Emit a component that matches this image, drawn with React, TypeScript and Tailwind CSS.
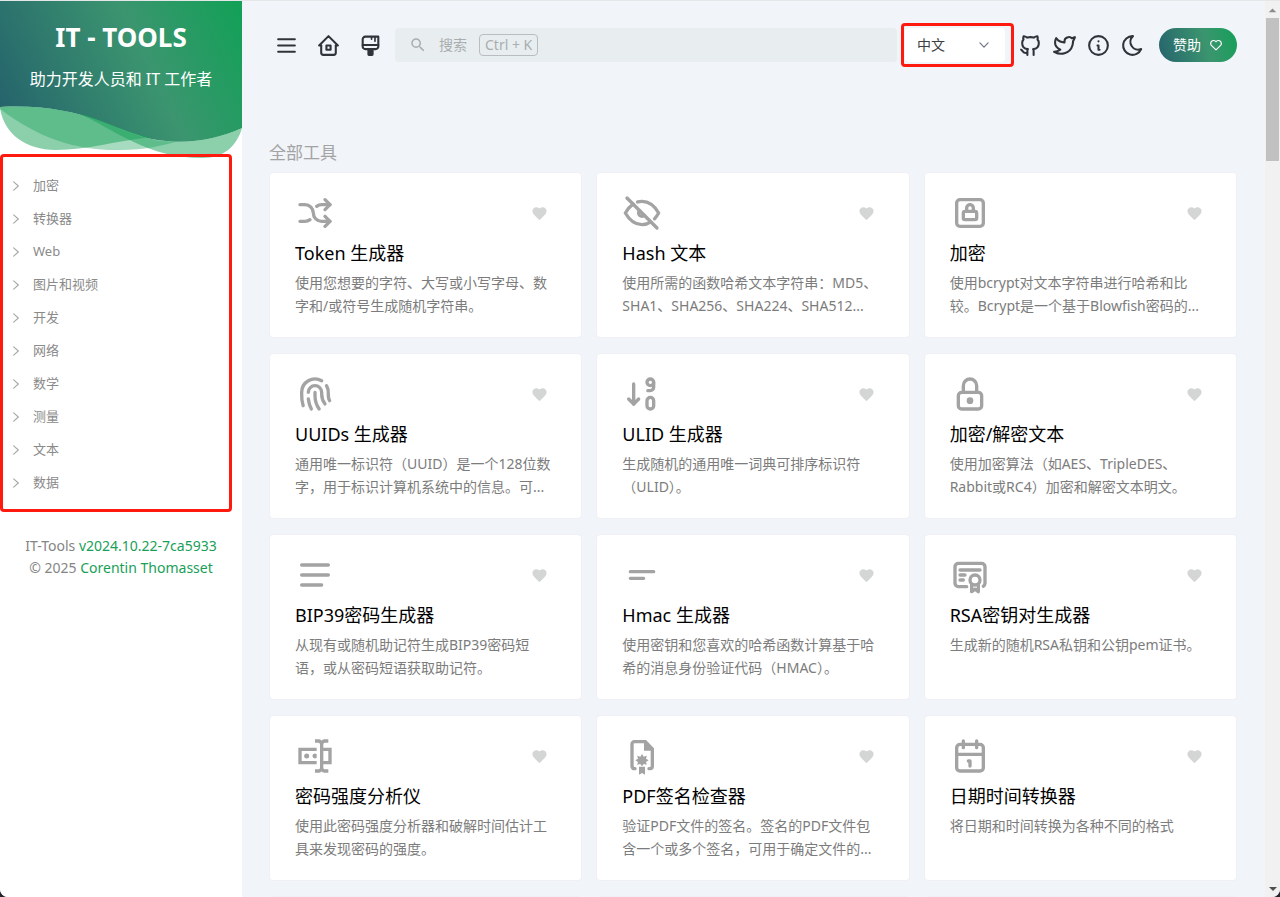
import React from 'react';

interface IconProps {
  className?: string;
  children: React.ReactNode;
}

const StrokeIcon: React.FC<IconProps> = ({ className, children }) => (
  <svg
    viewBox="0 0 24 24"
    fill="none"
    stroke="currentColor"
    strokeWidth="2"
    strokeLinecap="round"
    strokeLinejoin="round"
    className={className}
    aria-hidden="true"
  >
    {children}
  </svg>
);

const FillIcon: React.FC<IconProps> = ({ className, children }) => (
  <svg viewBox="0 0 24 24" fill="currentColor" className={className} aria-hidden="true">
    {children}
  </svg>
);

const toolIcon = 'size-10';

const ShuffleIcon = () => (
  <StrokeIcon className={toolIcon}>
    <path d="M18 4l3 3l-3 3" />
    <path d="M18 20l3 -3l-3 -3" />
    <path d="M3 7h3a5 5 0 0 1 5 5a5 5 0 0 0 5 5h5" />
    <path d="M21 7h-5a4.978 4.978 0 0 0 -3 1m-4 8a4.984 4.984 0 0 1 -3 1h-3" />
  </StrokeIcon>
);

const EyeOffIcon = () => (
  <StrokeIcon className={toolIcon}>
    <path d="M3 3l18 18" />
    <path d="M10.584 10.587a2 2 0 0 0 2.828 2.83" />
    <path d="M9.363 5.365a9.466 9.466 0 0 1 2.637 -.365c4 0 7.333 2.333 10 7c-.778 1.361 -1.612 2.524 -2.503 3.488m-2.14 1.861c-1.631 1.1 -3.415 1.651 -5.357 1.651c-4 0 -7.333 -2.333 -10 -7c1.369 -2.395 2.913 -4.175 4.632 -5.341" />
  </StrokeIcon>
);

const LockSquareIcon = () => (
  <StrokeIcon className={toolIcon}>
    <rect x="8" y="11" width="8" height="5" rx="1" />
    <path d="M10 11v-2a2 2 0 1 1 4 0v2" />
    <rect x="4" y="4" width="16" height="16" rx="2" />
  </StrokeIcon>
);

const FingerprintIcon = () => (
  <StrokeIcon className={toolIcon}>
    <path d="M18.9 7a8 8 0 0 1 1.1 5v1a6 6 0 0 0 .8 3" />
    <path d="M8 11a4 4 0 0 1 8 0v1a10 10 0 0 0 2 6" />
    <path d="M12 11v2a14 14 0 0 0 2.5 8" />
    <path d="M8 15a18 18 0 0 0 1.8 6" />
    <path d="M4.9 19a22 22 0 0 1 -.9 -7v-1a8 8 0 0 1 12 -6.95" />
  </StrokeIcon>
);

const SortNumbersIcon = () => (
  <StrokeIcon className={toolIcon}>
    <path d="M4 15l3 3l3 -3" />
    <path d="M7 6v12" />
    <path d="M17 14a2 2 0 0 1 2 2v3a2 2 0 1 1 -4 0v-3a2 2 0 0 1 2 -2z" />
    <circle cx="17" cy="5" r="2" />
    <path d="M19 5v3a2 2 0 0 1 -2 2h-1.5" />
  </StrokeIcon>
);

const LockIcon = () => (
  <StrokeIcon className={toolIcon}>
    <rect x="5" y="11" width="14" height="10" rx="2" />
    <circle cx="12" cy="16" r="1" />
    <path d="M8 11v-4a4 4 0 0 1 8 0v4" />
  </StrokeIcon>
);

const AlignLeftIcon = () => (
  <StrokeIcon className={toolIcon}>
    <path d="M4 6h16M4 12h16M4 18h12" />
  </StrokeIcon>
);

const ShortTextIcon = () => (
  <StrokeIcon className={toolIcon}>
    <path d="M5 10h14M5 14h8" />
  </StrokeIcon>
);

const CertificateIcon = () => (
  <StrokeIcon className={toolIcon}>
    <circle cx="15" cy="15" r="3" />
    <path d="M13 17.5v4.5l2 -1.5l2 1.5v-4.5" />
    <path d="M10 19h-5a2 2 0 0 1 -2 -2v-10c0 -1.1 .9 -2 2 -2h14a2 2 0 0 1 2 2v10a2 2 0 0 1 -1 1.73" />
    <path d="M6 9h12M6 12h3M6 15h2" />
  </StrokeIcon>
);

const PasswordIcon = () => (
  <FillIcon className={toolIcon}>
    <path d="M17,7H22V17H17V19A1,1 0 0,0 18,20H20V22H17.5C16.95,22 16,21.55 16,21C16,21.55 15.05,22 14.5,22H12V20H14A1,1 0 0,0 15,19V5A1,1 0 0,0 14,4H12V2H14.5C15.05,2 16,2.45 16,3C16,2.45 16.95,2 17.5,2H20V4H18A1,1 0 0,0 17,5V7M2,7H13V9H4V15H13V17H2V7M20,15V9H17V15H20M8.5,12A1.5,1.5 0 0,0 7,10.5A1.5,1.5 0 0,0 5.5,12A1.5,1.5 0 0,0 7,13.5A1.5,1.5 0 0,0 8.5,12M13,10.89C12.39,10.33 11.44,10.38 10.88,11C10.32,11.6 10.37,12.55 11,13.11C11.55,13.63 12.43,13.63 13,13.11V10.89Z" />
  </FillIcon>
);

const PdfSignatureIcon = () => (
  <FillIcon className={toolIcon}>
    <path
      d="M7.8 19.6H7.4A1.4 1.4 0 0 1 6 18.2V4.8A1.4 1.4 0 0 1 7.4 3.4H14L18.2 7.8V18.2A1.4 1.4 0 0 1 16.8 19.6H16.2"
      fill="none"
      stroke="currentColor"
      strokeWidth="2"
      strokeLinecap="round"
    />
    <path d="M13.2 2.8V8.8H19.2Z" />
    <path d="M12 10.8L13 12.4L14.9 11.9L14.4 13.6L16 14.6L14.4 15.6L14.9 17.3L13 16.8L12 18.2L11 16.8L9.1 17.3L9.6 15.6L8 14.6L9.6 13.6L9.1 11.9L11 12.4Z" />
    <path d="M10.2 18.4H13.8V23.2L12 22.2L10.2 23.2Z" />
  </FillIcon>
);

const CalendarIcon = () => (
  <StrokeIcon className={toolIcon}>
    <rect x="4" y="5" width="16" height="16" rx="2" />
    <path d="M16 3v4M8 3v4M4 11h16" />
    <path d="M11 15h1M12 15v3" />
  </StrokeIcon>
);

const HeartIcon = () => (
  <FillIcon className="size-[17px]">
    <path d="M12 21.35l-1.45-1.32C5.4 15.36 2 12.28 2 8.5C2 5.42 4.42 3 7.5 3c1.74 0 3.41.81 4.5 2.09C13.09 3.81 14.76 3 16.5 3C19.58 3 22 5.42 22 8.5c0 3.78-3.4 6.86-8.55 11.54L12 21.35z" />
  </FillIcon>
);

interface Tool {
  name: string;
  description: string;
  icon: React.FC;
}

const tools: Tool[] = [
  { name: 'Token 生成器', description: '使用您想要的字符、大写或小写字母、数\n字和/或符号生成随机字符串。', icon: ShuffleIcon },
  { name: 'Hash 文本', description: '使用所需的函数哈希文本字符串：MD5、\nSHA1、SHA256、SHA224、SHA512...', icon: EyeOffIcon },
  { name: '加密', description: '使用bcrypt对文本字符串进行哈希和比\n较。Bcrypt是一个基于Blowfish密码的...', icon: LockSquareIcon },
  { name: 'UUIDs 生成器', description: '通用唯一标识符（UUID）是一个128位数\n字，用于标识计算机系统中的信息。可...', icon: FingerprintIcon },
  { name: 'ULID 生成器', description: '生成随机的通用唯一词典可排序标识符\n（ULID）。', icon: SortNumbersIcon },
  { name: '加密/解密文本', description: '使用加密算法（如AES、TripleDES、\nRabbit或RC4）加密和解密文本明文。', icon: LockIcon },
  { name: 'BIP39密码生成器', description: '从现有或随机助记符生成BIP39密码短\n语，或从密码短语获取助记符。', icon: AlignLeftIcon },
  { name: 'Hmac 生成器', description: '使用密钥和您喜欢的哈希函数计算基于哈\n希的消息身份验证代码（HMAC）。', icon: ShortTextIcon },
  { name: 'RSA密钥对生成器', description: '生成新的随机RSA私钥和公钥pem证书。', icon: CertificateIcon },
  { name: '密码强度分析仪', description: '使用此密码强度分析器和破解时间估计工\n具来发现密码的强度。', icon: PasswordIcon },
  { name: 'PDF签名检查器', description: '验证PDF文件的签名。签名的PDF文件包\n含一个或多个签名，可用于确定文件的...', icon: PdfSignatureIcon },
  { name: '日期时间转换器', description: '将日期和时间转换为各种不同的格式', icon: CalendarIcon },
];

const categories = ['加密', '转换器', 'Web', '图片和视频', '开发', '网络', '数学', '测量', '文本', '数据'];

const ToolCard: React.FC<{ tool: Tool }> = ({ tool }) => {
  const Icon = tool.icon;
  return (
    <article className="min-h-[166px] rounded border border-[#efeff5] bg-white px-[25px] py-5">
      <div className="flex items-center justify-between text-[#a3a3a3]">
        <Icon />
        <button
          type="button"
          aria-label="收藏"
          className="flex size-[34px] items-center justify-center text-[#d4d6d6]"
        >
          <HeartIcon />
        </button>
      </div>
      <h3 className="mt-1.5 text-lg leading-7 whitespace-nowrap text-black">{tool.name}</h3>
      <p className="mt-1 text-sm leading-[23px] whitespace-pre text-[#7c7c7c]">{tool.description}</p>
    </article>
  );
};

const SidebarHero = () => (
  <a href="#home" className="relative block h-[153px] text-center text-white">
    <svg
      viewBox="0 0 243 160"
      preserveAspectRatio="none"
      className="absolute top-0 left-0 h-40 w-full"
      aria-hidden="true"
    >
      <defs>
        <linearGradient id="hero" gradientUnits="userSpaceOnUse" x1="11" y1="135" x2="246" y2="24">
          <stop offset="0" stopColor="#25636c" />
          <stop offset="0.6" stopColor="#3b956f" />
          <stop offset="1" stopColor="#14a058" />
        </linearGradient>
      </defs>
      <path d="M0 0H243V127C214 140 184 144 152 138C112 129 82 102 0 106Z" fill="url(#hero)" />
      <path
        d="M0 107C4 133 26 149 56 149C88 149 116 140 152 136C112 129 82 102 0 106Z"
        fill="#18a058"
        fillOpacity="0.5"
      />
      <path
        d="M0 108C40 138 78 150 122 149C144 149 162 145 180 140C166 141 158 140 152 138C112 129 82 102 0 106Z"
        fill="#18a058"
        fillOpacity="0.38"
      />
      <path
        d="M78 112C118 130 148 157 203 157C226 157 238 144 243 127C214 140 184 144 152 138C124 132 104 118 78 112Z"
        fill="#18a058"
        fillOpacity="0.5"
      />
    </svg>
    <div className="relative pt-[18px]">
      <div className="text-[26px] leading-9 font-bold">IT - TOOLS</div>
      <div className="mt-3 text-base leading-6">助力开发人员和 IT 工作者</div>
    </div>
  </a>
);

const Sidebar = () => (
  <aside className="w-[242px] shrink-0 bg-white">
    <SidebarHero />
    <nav className="relative mr-2.5 rounded-sm border-3 border-[#ff1a10] pt-3 pb-2.5">
      {categories.map((name) => (
        <button
          key={name}
          type="button"
          className="flex h-[33px] w-full items-center gap-2.5 pl-1.5 text-[13px] text-[#8a8a8a]"
        >
          <StrokeIcon className="size-3.5 text-[#a8a8a8]">
            <path d="M8 5l8 7l-8 7" />
          </StrokeIcon>
          {name}
        </button>
      ))}
    </nav>
    <footer className="pt-[23px] text-center text-sm leading-[22px] text-[#858585]">
      <div>
        IT-Tools{' '}
        <a href="#version" className="text-[#18a058]">
          v2024.10.22-7ca5933
        </a>
      </div>
      <div>
        © 2025{' '}
        <a href="#author" className="text-[#18a058]">
          Corentin Thomasset
        </a>
      </div>
    </footer>
  </aside>
);

const BarButton: React.FC<{ label: string; children: React.ReactNode }> = ({ label, children }) => (
  <button type="button" aria-label={label} className="flex size-[34px] shrink-0 items-center justify-center">
    <StrokeIcon className="size-[25px]">{children}</StrokeIcon>
  </button>
);

const TopBar = () => (
  <header className="flex items-center gap-2 text-[#30343a]">
    <BarButton label="菜单">
      <path d="M4 6h16M4 12h16M4 18h16" />
    </BarButton>
    <BarButton label="首页">
      <path d="M5 12H3l9 -9l9 9h-2" />
      <path d="M5 12v7a2 2 0 0 0 2 2h10a2 2 0 0 0 2 -2v-7" />
      <rect x="10" y="12" width="4" height="4" />
    </BarButton>
    <BarButton label="主题">
      <path d="M7 3.5h12.5v9.5a2.5 2.5 0 0 1 -2.5 2.5h-10a2.5 2.5 0 0 1 -2.5 -2.5v-7a2.5 2.5 0 0 1 2.5 -2.5z" />
      <path d="M4.5 11.5h15" />
      <path d="M13 4v2M16.3 4v4" strokeWidth="1.6" />
      <rect x="10" y="16" width="4" height="5" rx="0.5" fill="currentColor" />
    </BarButton>
    <button
      type="button"
      className="flex h-[34px] flex-1 cursor-text items-center rounded bg-[#e8edef] pl-3.5 text-sm text-[#a9adaf]"
    >
      <FillIcon className="size-[18px]">
        <path d="M15.5 14h-.79l-.28-.27A6.471 6.471 0 0 0 16 9.5A6.5 6.5 0 1 0 9.5 16c1.61 0 3.09-.59 4.23-1.57l.27.28v.79l5 4.99L20.49 19l-4.99-5zm-6 0C7.01 14 5 11.99 5 9.5S7.01 5 9.5 5S14 7.01 14 9.5S11.99 14 9.5 14z" />
      </FillIcon>
      <span className="ml-3">搜索</span>
      <span className="ml-3 rounded border border-[#b9bdbf] px-[5px] leading-5">Ctrl + K</span>
    </button>
    <div className="relative w-[100px] shrink-0">
      <select
        aria-label="语言"
        className="h-[34px] w-full appearance-none rounded bg-white pl-3 text-sm text-[#3c3f44]"
      >
        <option>中文</option>
      </select>
      <StrokeIcon className="pointer-events-none absolute top-2.5 right-3.5 size-3.5 text-[#6b7280]">
        <path d="M5 8.5l7 7l7 -7" />
      </StrokeIcon>
      <div className="pointer-events-none absolute -top-[5px] -right-[9px] -bottom-[5px] -left-1 rounded-sm border-3 border-[#ff1a10]" />
    </div>
    <div className="flex">
      <BarButton label="GitHub">
        <path d="M9 19c-4.3 1.4 -4.3 -2.5 -6 -3m12 5v-3.5c0 -1 .1 -1.4 -.5 -2c2.8 -.3 5.5 -1.4 5.5 -6a4.6 4.6 0 0 0 -1.3 -3.2a4.2 4.2 0 0 0 -.1 -3.2s-1.1 -.3 -3.5 1.3a12.3 12.3 0 0 0 -6.2 0c-2.4 -1.6 -3.5 -1.3 -3.5 -1.3a4.2 4.2 0 0 0 -.1 3.2a4.6 4.6 0 0 0 -1.3 3.2c0 4.6 2.7 5.7 5.5 6c-.6 .6 -.6 1.2 -.5 2v3.5" />
      </BarButton>
      <BarButton label="Twitter">
        <path d="M22 4.01c-1 .49 -1.98 .689 -3 .99c-1.121 -1.265 -2.783 -1.335 -4.38 -.737s-2.643 2.06 -2.62 3.737v1c-3.245 .083 -6.135 -1.395 -8 -4c0 0 -4.182 7.433 4 11c-1.872 1.247 -3.739 2.088 -6 2c3.308 1.803 6.913 2.423 10.034 1.517c3.58 -1.04 6.522 -3.723 7.651 -7.742a13.84 13.84 0 0 0 .497 -3.753c0 -.249 1.51 -2.772 1.818 -4.013z" />
      </BarButton>
      <BarButton label="关于">
        <circle cx="12" cy="12" r="9" />
        <path d="M12 8h.01" />
        <path d="M11 12h1v4h1" />
      </BarButton>
      <BarButton label="深色模式">
        <path d="M12 3c.132 0 .263 0 .393 0a7.5 7.5 0 0 0 7.92 12.446a9 9 0 1 1 -8.313 -12.454z" />
      </BarButton>
    </div>
    <a
      href="#sponsor"
      className="ml-0.5 flex h-[34px] shrink-0 items-center gap-2 rounded-full bg-linear-[75deg] from-[#25636c] via-[#3b956f] via-60% to-[#14a058] px-3.5 text-sm text-white"
    >
      赞助
      <StrokeIcon className="size-3.5">
        <path d="M19.5 13l-7.5 7.5l-7.5 -7.5a5 5 0 1 1 7.5 -6.5a5 5 0 1 1 7.5 6.5" />
      </StrokeIcon>
    </a>
  </header>
);

const Scrollbar = () => (
  <div className="flex w-[15px] shrink-0 flex-col items-center bg-[#f1f1f1]" aria-hidden="true">
    <svg viewBox="0 0 15 18" className="h-[17px] w-full fill-[#8c8c8c]">
      <path d="M3.5 12L7.5 8L11.5 12Z" />
    </svg>
    <div className="h-[143px] w-[13px] bg-[#c1c1c1]" />
    <svg viewBox="0 0 15 18" className="mt-auto h-[18px] w-full fill-[#505050]">
      <path d="M4 8H12L8 12Z" />
    </svg>
  </div>
);

export default function App() {
  return (
    <div className="h-screen bg-[#23262c] font-['Noto_Sans','Noto_Sans_CJK_SC',sans-serif]">
      <div className="flex h-full overflow-hidden rounded-b-lg border-t border-[#e4e6e8] bg-[#f1f4f9]">
        <Sidebar />
        <main className="min-w-0 flex-1 pt-[27px] pr-7 pl-[27px]">
          <TopBar />
          <h2 className="mt-[78px] text-[17px] leading-[26px] text-[#a3a3a3]">全部工具</h2>
          <div className="mt-1.5 grid grid-cols-3 gap-x-3.5 gap-y-[15px]">
            {tools.map((tool) => (
              <ToolCard key={tool.name} tool={tool} />
            ))}
            <div className="h-[166px] rounded border border-[#efeff5] bg-white" />
            <div className="h-[166px] rounded border border-[#efeff5] bg-white" />
            <div className="h-[166px] rounded border border-[#efeff5] bg-white" />
          </div>
        </main>
        <Scrollbar />
      </div>
    </div>
  );
}
